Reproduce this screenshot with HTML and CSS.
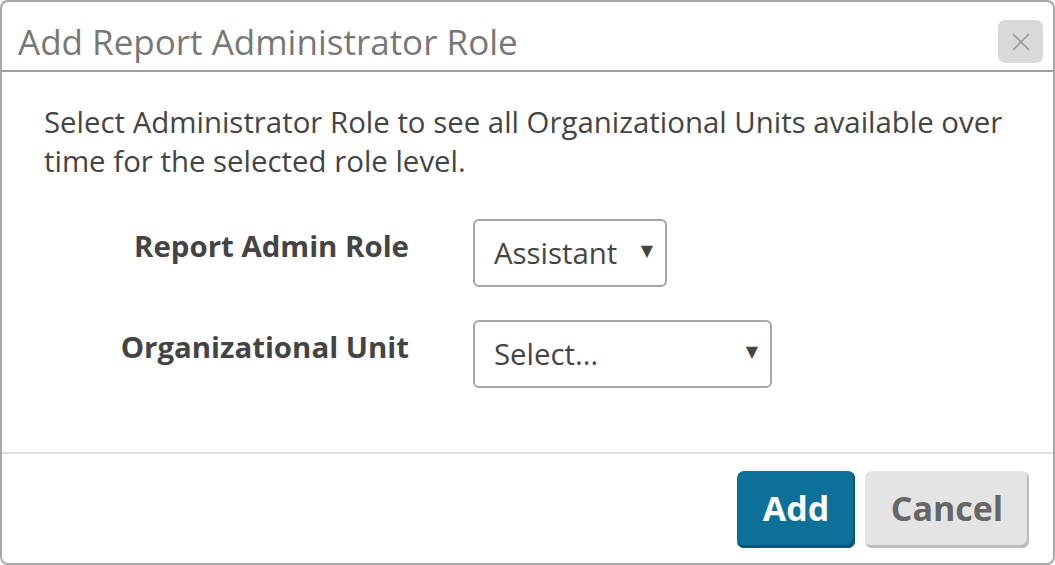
FILE: index.html
```html
<!DOCTYPE html>
<html>
<head>
<meta charset="utf-8">
<link rel="stylesheet" href="styles.css">
</head>
<body>
<div class="dialog">
  <div class="dialog-header">
    <h1 class="dialog-title">Add Report Administrator Role</h1>
    <button class="close-btn" aria-label="Close">
      <svg width="22" height="22" viewBox="0 0 22 22"><path d="M3 3 L19 19 M19 3 L3 19" stroke="#9a9a9a" stroke-width="1.7" fill="none"/></svg>
    </button>
  </div>
  <div class="dialog-body">
    <p class="intro">Select Administrator Role to see all Organizational Units available over time for the selected role level.</p>
    <div class="form-row">
      <label class="form-label">Report Admin Role</label>
      <div class="select select-role"><span>Assistant</span><span class="caret">&#9660;</span></div>
    </div>
    <div class="form-row">
      <label class="form-label">Organizational Unit</label>
      <div class="select select-unit"><span>Select...</span><span class="caret">&#9660;</span></div>
    </div>
  </div>
  <div class="dialog-footer">
    <button class="btn btn-primary">Add</button>
    <button class="btn btn-default">Cancel</button>
  </div>
</div>
</body>
</html>
```

FILE: styles.css
```css
html, body {
  margin: 0;
  padding: 0;
  background: #ffffff;
}
body {
  font-family: "Open Sans", "DejaVu Sans", sans-serif;
  color: #444444;
}
.dialog {
  box-sizing: border-box;
  width: 1055px;
  height: 565px;
  border: 2px solid #a8a8a8;
  border-radius: 8px;
  display: flex;
  flex-direction: column;
  overflow: hidden;
}
.dialog-header {
  box-sizing: border-box;
  height: 70px;
  border-bottom: 2px solid #9e9e9e;
  display: flex;
  align-items: flex-start;
  justify-content: space-between;
  padding: 0 10px 0 16px;
}
.dialog-title {
  margin: 19px 0 0 0;
  font-size: 35px;
  font-weight: 400;
  color: #777777;
  line-height: 42px;
}
.close-btn {
  width: 45px;
  height: 43px;
  border: none;
  border-radius: 7px;
  background: #d9d9d9;
  display: flex;
  align-items: center;
  justify-content: center;
  padding: 0;
  margin-top: 18px;
}
.dialog-body {
  flex: 1;
  padding: 31px 42px 0 42px;
}
.intro {
  margin: 0 0 38px 0;
  font-size: 29.4px;
  line-height: 39px;
}
.form-row {
  display: grid;
  grid-template-columns: 365px auto;
  column-gap: 64px;
  align-items: start;
  margin-bottom: 33px;
}
.form-label {
  text-align: right;
  font-weight: 700;
  font-size: 29.4px;
  line-height: 39px;
  padding-top: 8px;
  color: #444444;
}
.select {
  box-sizing: border-box;
  height: 68px;
  border: 2px solid #a5a5a5;
  border-radius: 6px;
  display: flex;
  align-items: center;
  justify-content: space-between;
  padding: 0 12px 0 19px;
  font-size: 29.4px;
  color: #444444;
}
.select-role { width: 194px; }
.select-unit { width: 299px; }
.caret {
  font-size: 16px;
  color: #444444;
  margin-top: -6px;
}
.dialog-footer {
  border-top: 2px solid #dddddd;
  height: 111px;
  box-sizing: border-box;
  display: flex;
  justify-content: flex-end;
  align-items: flex-start;
  gap: 10px;
  padding: 17px 24px 0 0;
}
.btn {
  height: 77px;
  border: none;
  border-radius: 7px;
  font-family: "Open Sans", "DejaVu Sans", sans-serif;
  font-weight: 700;
  font-size: 34px;
  padding: 0 0 3px;
}
.btn-primary {
  width: 118px;
  background: #0d7099;
  color: #ffffff;
  box-shadow: inset -2px -3px 0 #0a5675;
}
.btn-default {
  width: 164px;
  background: #e4e4e4;
  color: #666666;
  box-shadow: inset -2px -3px 0 #bdbdbd;
}
```
